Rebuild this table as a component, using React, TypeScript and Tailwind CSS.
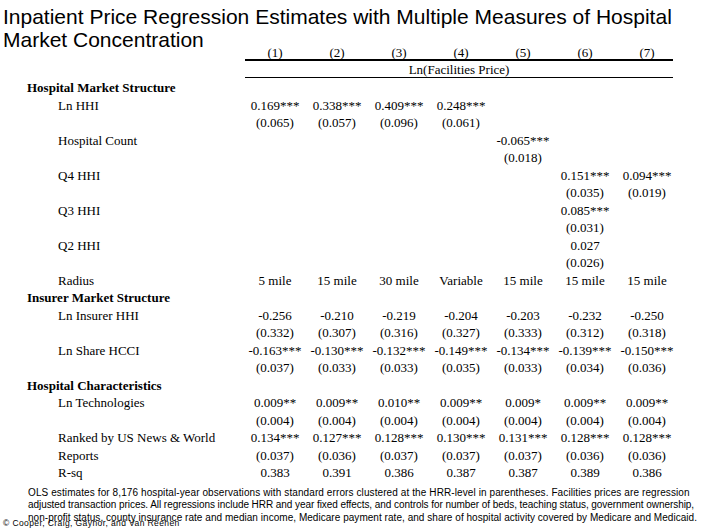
const serif = { fontFamily: '"Liberation Serif", "Times New Roman", serif' };
const sans = { fontFamily: '"Liberation Sans", Arial, sans-serif' };

type Row = { label: string; kind: "head" | "item" | "se"; values: string[] };

const e = "";
const rows: Row[] = [
  { label: "Hospital Market Structure", kind: "head", values: [] },
  { label: "Ln HHI", kind: "item", values: ["0.169***", "0.338***", "0.409***", "0.248***", e, e, e] },
  { label: "", kind: "se", values: ["(0.065)", "(0.057)", "(0.096)", "(0.061)", e, e, e] },
  { label: "Hospital Count", kind: "item", values: [e, e, e, e, "-0.065***", e, e] },
  { label: "", kind: "se", values: [e, e, e, e, "(0.018)", e, e] },
  { label: "Q4 HHI", kind: "item", values: [e, e, e, e, e, "0.151***", "0.094***"] },
  { label: "", kind: "se", values: [e, e, e, e, e, "(0.035)", "(0.019)"] },
  { label: "Q3 HHI", kind: "item", values: [e, e, e, e, e, "0.085***", e] },
  { label: "", kind: "se", values: [e, e, e, e, e, "(0.031)", e] },
  { label: "Q2 HHI", kind: "item", values: [e, e, e, e, e, "0.027", e] },
  { label: "", kind: "se", values: [e, e, e, e, e, "(0.026)", e] },
  { label: "Radius", kind: "item", values: ["5 mile", "15 mile", "30 mile", "Variable", "15 mile", "15 mile", "15 mile"] },
  { label: "Insurer Market Structure", kind: "head", values: [] },
  { label: "Ln Insurer HHI", kind: "item", values: ["-0.256", "-0.210", "-0.219", "-0.204", "-0.203", "-0.232", "-0.250"] },
  { label: "", kind: "se", values: ["(0.332)", "(0.307)", "(0.316)", "(0.327)", "(0.333)", "(0.312)", "(0.318)"] },
  { label: "Ln Share HCCI", kind: "item", values: ["-0.163***", "-0.130***", "-0.132***", "-0.149***", "-0.134***", "-0.139***", "-0.150***"] },
  { label: "", kind: "se", values: ["(0.037)", "(0.033)", "(0.033)", "(0.035)", "(0.033)", "(0.034)", "(0.036)"] },
  { label: "Hospital Characteristics", kind: "head", values: [] },
  { label: "Ln Technologies", kind: "item", values: ["0.009**", "0.009**", "0.010**", "0.009**", "0.009*", "0.009**", "0.009**"] },
  { label: "", kind: "se", values: ["(0.004)", "(0.004)", "(0.004)", "(0.004)", "(0.004)", "(0.004)", "(0.004)"] },
  { label: "Ranked by US News & World", kind: "item", values: ["0.134***", "0.127***", "0.128***", "0.130***", "0.131***", "0.128***", "0.128***"] },
  { label: "Reports", kind: "item", values: ["(0.037)", "(0.036)", "(0.037)", "(0.037)", "(0.037)", "(0.036)", "(0.036)"] },
  { label: "R-sq", kind: "item", values: ["0.383", "0.391", "0.386", "0.387", "0.387", "0.389", "0.386"] },
];

function TableRow({ row }: { row: Row }) {
  if (row.kind === "head") {
    return (
      <div className="h-[17.5px] flex items-center pl-[27px] font-bold text-[13px] leading-none">
        {row.label}
      </div>
    );
  }
  return (
    <div className="h-[17.5px] grid grid-cols-[244px_repeat(7,62px)] items-center text-[13px] leading-none">
      <div className="pl-[58px] whitespace-nowrap">{row.label}</div>
      {row.values.map((v, i) => (
        <div key={i} className="text-center whitespace-nowrap">
          {v}
        </div>
      ))}
    </div>
  );
}

export default function App() {
  return (
    <div className="w-[706px] h-[529px] bg-white text-black overflow-hidden">
      {/* Title */}
      <div className="pt-[5px] pl-[3px] text-[21px] leading-[23px] whitespace-nowrap" style={sans}>
        Inpatient Price Regression Estimates with Multiple Measures of Hospital
        <br />
        Market Concentration
      </div>

      <div style={serif}>
        {/* column numbers */}
        <div className="-mt-[6px] h-[14px] grid grid-cols-[244px_repeat(7,62px)] items-center text-[13px] leading-none">
          <div />
          {["(1)", "(2)", "(3)", "(4)", "(5)", "(6)", "(7)"].map((h) => (
            <div key={h} className="text-center">
              {h}
            </div>
          ))}
        </div>
        <div className="ml-[245px] w-[428px] h-[2px] bg-black" />
        <div className="ml-[245px] w-[428px] h-[16px] flex items-end justify-center pb-[1px] text-[13px] leading-none">
          Ln(Facilities Price)
        </div>
        <div className="ml-[245px] w-[428px] h-px bg-black" />

        <div className="mt-[1px]">
          {rows.map((r, i) => (
            <TableRow key={i} row={r} />
          ))}
        </div>
      </div>

      {/* Notes */}
      <div className="mt-[5px] pl-[28px] text-[10px] leading-[12.5px] whitespace-nowrap" style={sans}>
        <div className="tracking-[0.1px]">
          OLS estimates for 8,176 hospital-year observations with standard errors clustered at the HRR-level in parentheses. Facilities prices are regression
        </div>
        <div className="tracking-[-0.06px]">
          adjusted transaction prices. All regressions include HRR and year fixed effects, and controls for number of beds, teaching status, government ownership,
        </div>
        <div className="tracking-[0.04px]">
          non-profit status, county insurance rate and median income, Medicare payment rate, and share of hospital activity covered by Medicare and Medicaid.
        </div>
      </div>
      <div className="-mt-[5px] pl-[3px] text-[8.5px] leading-[9px] tracking-[0.4px] whitespace-nowrap" style={sans}>
        © Cooper, Craig, Gaynor, and Van Reenen
      </div>
    </div>
  );
}
